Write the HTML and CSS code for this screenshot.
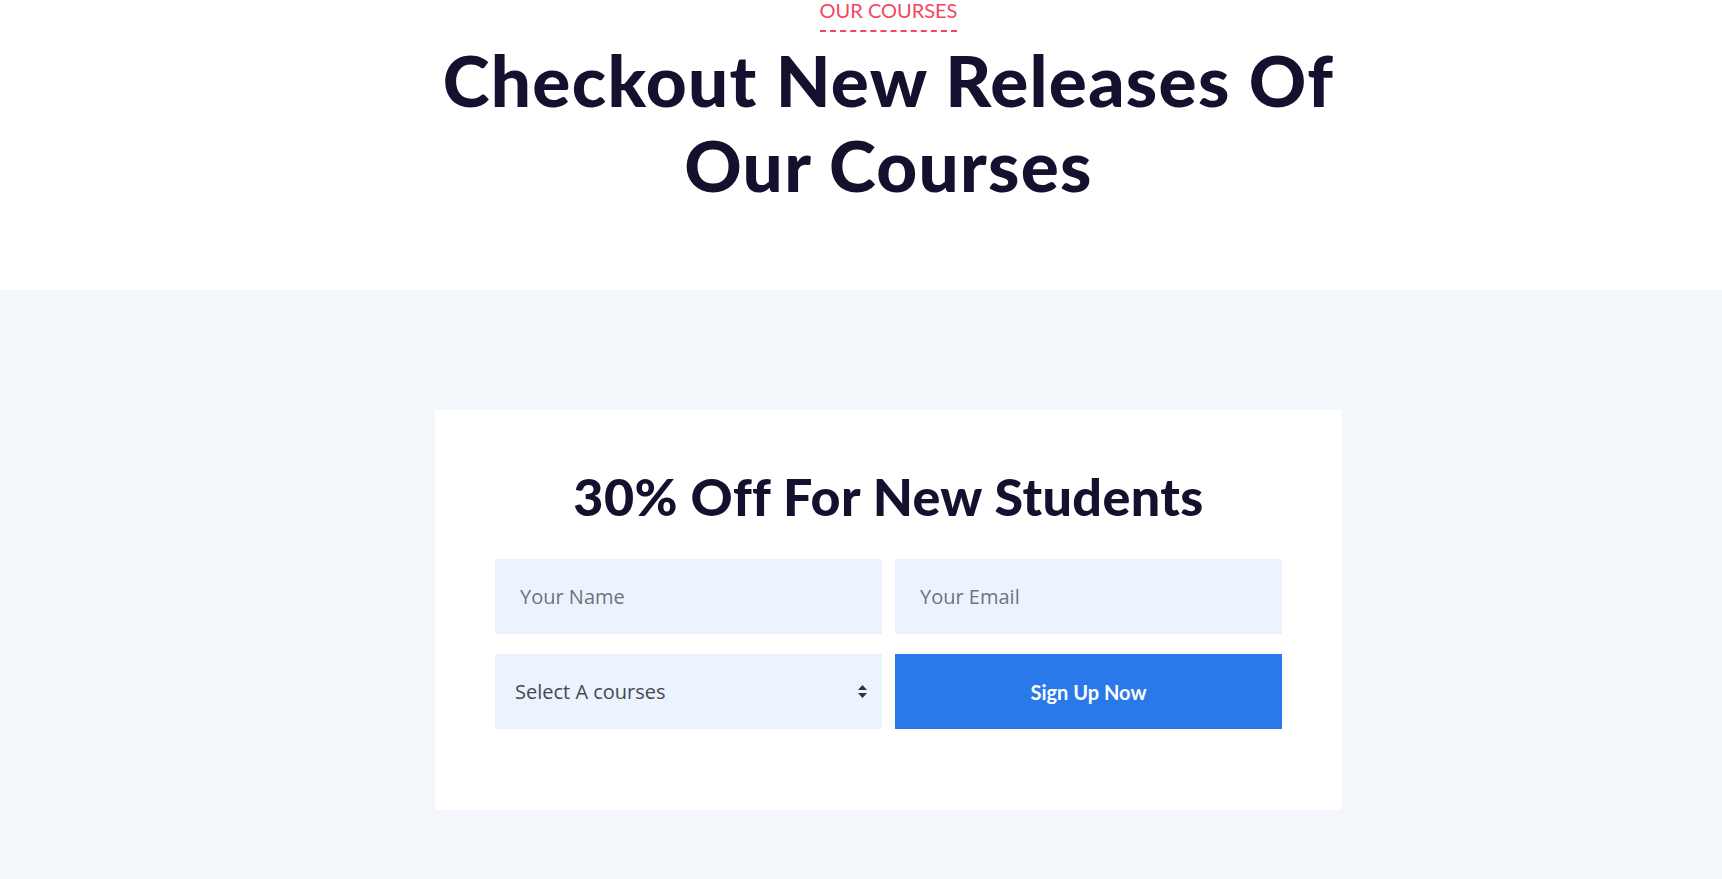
FILE: index.html
```html
<!DOCTYPE html>
<html lang="en">
<head>
<meta charset="utf-8">
<title>Our Courses</title>
<link rel="stylesheet" href="styles.css">
</head>
<body>
  <section class="intro">
    <div class="container">
      <div class="label"><span>OUR COURSES</span></div>
      <h2 class="title">Checkout New Releases Of<br>Our Courses</h2>
    </div>
  </section>
  <section class="promo">
    <div class="container">
      <div class="card">
        <h3 class="card-title">30% Off For New Students</h3>
        <form class="form">
          <input class="field" type="text" placeholder="Your Name">
          <input class="field" type="email" placeholder="Your Email">
          <div class="select">
            <span>Select A courses</span>
            <svg class="arrows" width="9" height="13" viewBox="0 0 9 13"><path d="M4.5 0 L9 5 H0 Z M0 8 H9 L4.5 13 Z" fill="#333"/></svg>
          </div>
          <button class="btn" type="button">Sign Up Now</button>
        </form>
      </div>
    </div>
  </section>
</body>
</html>
```
FILE: styles.css
```css
* { box-sizing: border-box; }
html, body { margin: 0; padding: 0; }
body {
  font-family: "Lato", "Noto Sans", sans-serif;
  color: #14112e;
  background: #f3f7fc;
  height: 879px;
  overflow: hidden;
}
.container {
  width: 907px;
  margin-left: calc(50% - 426px);
}
.intro {
  background: #fff;
  height: 290px;
}
.label {
  text-align: center;
}
.label span {
  display: inline-block;
  color: #f2475e;
  font-size: 20px;
  line-height: 20px;
  padding-bottom: 10px;
  border-bottom: 2px dashed #f2475e;
}
.title {
  margin: 5px 0 0;
  text-align: center;
  font-size: 71px;
  line-height: 85px;
  font-weight: 900;
  letter-spacing: 1.3px;
  color: #14112e;
}
.promo {
  padding-top: 120px;
}
.card {
  background: #fff;
  padding: 56px 60px 81px;
}
.card-title {
  margin: 0 0 33px;
  text-align: center;
  font-size: 52px;
  line-height: 60px;
  font-weight: 900;
  letter-spacing: 0.4px;
  color: #14112e;
}
.form {
  display: grid;
  grid-template-columns: 1fr 1fr;
  column-gap: 13px;
  row-gap: 20px;
}
.field {
  height: 75px;
  border: 0;
  outline: 0;
  background: #ebf3fe;
  padding: 0 25px;
  font-family: "Open Sans", sans-serif;
  font-size: 20px;
  color: #333;
}
.field::placeholder {
  color: #6f7479;
  opacity: 1;
}
.select {
  height: 75px;
  background: #ebf3fe;
  display: flex;
  align-items: center;
  justify-content: space-between;
  padding: 0 15px 0 20px;
  font-family: "Open Sans", sans-serif;
  font-size: 20px;
  color: #454a50;
}
.arrows { display: block; }
.btn {
  height: 75px;
  border: 0;
  background: #2a79e8;
  color: #fff;
  font-family: "Lato", sans-serif;
  font-size: 20px;
  font-weight: 700;
  cursor: pointer;
}
```
